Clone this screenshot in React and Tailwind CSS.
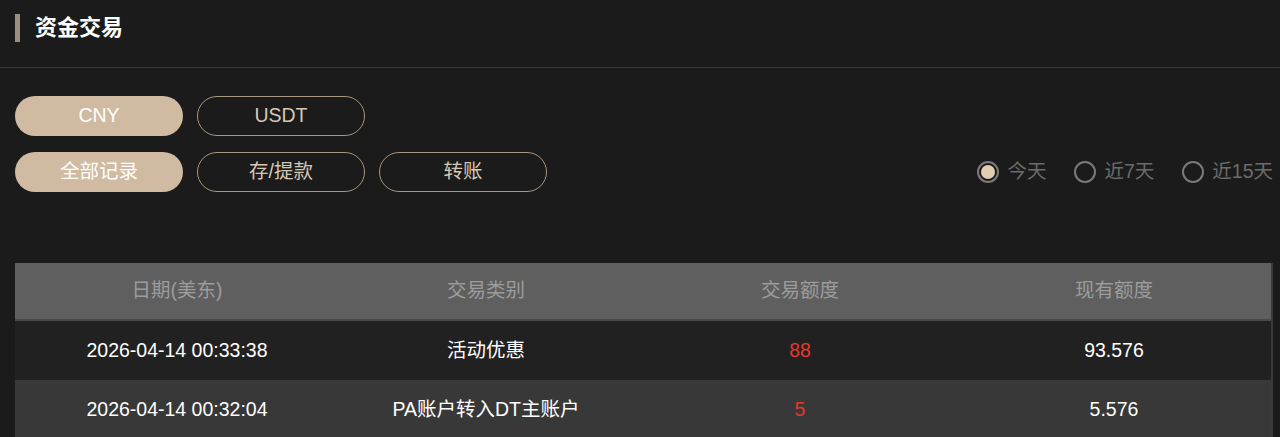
import { useState } from "react";

const CURRENCIES = ["CNY", "USDT"];
const TYPES = ["全部记录", "存/提款", "转账"];
const RANGES = ["今天", "近7天", "近15天"];

const ROWS = [
  { date: "2026-04-14 00:33:38", type: "活动优惠", amount: "88", balance: "93.576" },
  { date: "2026-04-14 00:32:04", type: "PA账户转入DT主账户", amount: "5", balance: "5.576" },
];

function Pill({ active, children, onClick }) {
  return (
    <button
      onClick={onClick}
      className={
        active
          ? "w-[168px] h-10 rounded-full bg-[#d0bba2] text-white text-[19.5px]"
          : "w-[168px] h-10 rounded-full border border-[#a8967f] text-[#d6c8b5] text-[19.5px]"
      }
    >
      {children}
    </button>
  );
}

export default function App() {
  const [currency, setCurrency] = useState("CNY");
  const [type, setType] = useState("全部记录");
  const [range, setRange] = useState("今天");

  return (
    <div
      className="min-h-[437px] bg-[#1b1b1b]"
      style={{ fontFamily: '"Liberation Sans", "Noto Sans CJK SC", sans-serif' }}
    >
      {/* Header */}
      <div className="h-[68px] border-b border-[#3b3834] px-[15px] pt-[14px]">
        <div className="flex items-center gap-[15px] h-[28px]">
          <span className="w-[5px] h-[28px] bg-[#9c8f80]" />
          <h1 className="text-[22px] font-bold text-white leading-none">资金交易</h1>
        </div>
      </div>

      {/* Filters */}
      <div className="px-[15px] pt-[28px]">
        <div className="flex gap-[14px]">
          {CURRENCIES.map((c) => (
            <Pill key={c} active={currency === c} onClick={() => setCurrency(c)}>
              {c}
            </Pill>
          ))}
        </div>
        <div className="flex items-center justify-between mt-4">
          <div className="flex gap-[14px]">
            {TYPES.map((t) => (
              <Pill key={t} active={type === t} onClick={() => setType(t)}>
                {t}
              </Pill>
            ))}
          </div>
          <div className="flex items-center gap-[28px] mr-[-8px]">
            {RANGES.map((r) => (
              <button
                key={r}
                onClick={() => setRange(r)}
                className="flex items-center gap-[8px] text-[19.5px] text-[#6b6b6b]"
              >
                <span className="w-[22px] h-[22px] rounded-full border-2 border-[#7a7a7a] flex items-center justify-center">
                  {range === r && <span className="w-[14px] h-[14px] rounded-full bg-[#e2cdb2]" />}
                </span>
                {r}
              </button>
            ))}
          </div>
        </div>

        {/* Table */}
        <div className="mt-[71px] w-[1258px] border-r-2 border-[#3a3a3a]">
          <div className="grid grid-cols-4 h-[58px] items-center bg-[#5f5f5f] text-[19.5px] text-[#9c9c9c] text-center border-b-2 border-[#4a4a4a]">
            <div className="pl-[10px]">日期(美东)</div>
            <div>交易类别</div>
            <div>交易额度</div>
            <div>现有额度</div>
          </div>
          {ROWS.map((row, i) => (
            <div
              key={row.date}
              className={
                (i % 2 === 0 ? "bg-[#222121]" : "bg-[#383838]") +
                " grid grid-cols-4 h-[59px] items-center text-[19.5px] text-white text-center"
              }
            >
              <div className="pl-[10px]">{row.date}</div>
              <div>{row.type}</div>
              <div className="text-[#e2392e]">{row.amount}</div>
              <div>{row.balance}</div>
            </div>
          ))}
        </div>
      </div>
    </div>
  );
}
